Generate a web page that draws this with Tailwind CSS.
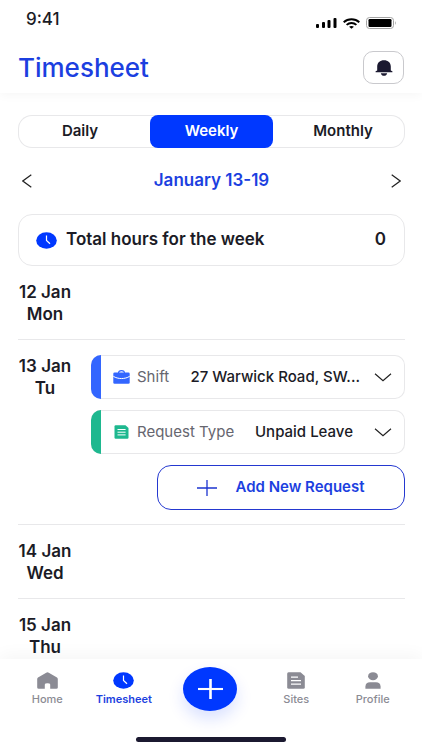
<!DOCTYPE html>
<html lang="en">
<head>
  <meta charset="UTF-8" />
  <meta name="viewport" content="width=device-width, initial-scale=1.0"/>
  <title>Timesheet</title>
  <script src="https://cdn.jsdelivr.net/npm/@tailwindcss/browser@4"></script>
</head>
<body class="h-screen flex flex-col bg-white text-[#1b1b26] font-['Inter','Open_Sans',sans-serif]">
  <header class="relative shrink-0 bg-white pt-2 pb-2 shadow-[0_2px_10px_rgba(0,0,0,0.04)]">
    <!-- Status bar -->
    <div class="flex justify-between items-center h-6 pl-[26px] pr-[25px]">
      <span class="text-[17px] font-medium">9:41</span>
      <div class="flex items-center gap-[6px] pt-[6px]">
        <svg class="w-[21px] h-[10px]" viewBox="0 0 21 10" fill="#000">
          <rect x="0" y="6" width="3" height="4" rx="1"/>
          <rect x="6" y="4" width="3" height="6" rx="1"/>
          <rect x="11.5" y="2" width="3" height="8" rx="1"/>
          <rect x="17.5" y="0" width="3" height="10" rx="1"/>
        </svg>
        <svg class="w-[17px] h-[11px]" viewBox="0 0 17 11" fill="none" stroke="#000" stroke-width="1.9">
          <path d="M0.7 4.2 C5 0.2 12 0.2 16.3 4.2"/>
          <path d="M3.6 6.9 C6.4 4.3 10.6 4.3 13.4 6.9"/>
          <path d="M6.1 8.8 C7.4 7.7 9.6 7.7 10.9 8.8 L8.5 10.8Z" fill="#000" stroke="none"/>
        </svg>
        <svg class="w-[31px] h-[12px]" viewBox="0 0 31 12">
          <rect x="0.5" y="0.5" width="27" height="11" rx="3" fill="none" stroke="#a3a3a3"/>
          <rect x="2.5" y="2" width="23" height="8" rx="1.2" fill="#000"/>
          <path d="M29 4 Q30.8 6 29 8Z" fill="#a3a3a3"/>
        </svg>
      </div>
    </div>
    <div class="flex justify-between items-center h-[35px] mt-[18px] px-[18px]">
      <h1 class="text-[26px] font-medium text-[#1c3fe0]">Timesheet</h1>
      <button aria-label="Notifications" class="w-[41px] h-[33px] flex items-center justify-center rounded-[10px] border border-[#c9c9cd]">
        <svg class="w-[18px] h-[16px]" viewBox="0 0 18 16" fill="#1b1930">
          <path d="M2.2 10.5 V6.5 C2.2 2.6 5 0.2 9 0.2 S15.8 2.6 15.8 6.5 V10.5 L17.4 11.3 V12.2 H0.6 V11.3Z"/>
          <path d="M5.8 13.2 H12.2 C11.6 15 10.6 15.8 9 15.8 S6.4 15 5.8 13.2Z"/>
        </svg>
      </button>
    </div>
  </header>

  <main class="flex-1 min-h-0 overflow-hidden pl-[18px] pr-[17px] pt-[22px]">
    <div class="flex h-[33px] rounded-[14px] text-[15px] font-semibold shadow-[inset_0_0_0_1px_#e8e8ea]">
      <button class="flex-1 pr-2">Daily</button>
      <button class="w-[123px] rounded-lg bg-[#0038ff] text-white">Weekly</button>
      <button class="flex-1 pl-2">Monthly</button>
    </div>

    <div class="flex justify-between items-center h-[66px] px-1">
      <button aria-label="Previous week">
        <svg class="w-[10px] h-[14px]" viewBox="0 0 10 14" fill="none" stroke="#222" stroke-width="1.2"><path d="M9.3 0.7 L0.8 7 L9.3 13.3"/></svg>
      </button>
      <h2 class="text-[17px] font-semibold text-[#1c3fe0]">January 13-19</h2>
      <button aria-label="Next week">
        <svg class="w-[10px] h-[14px]" viewBox="0 0 10 14" fill="none" stroke="#222" stroke-width="1.2"><path d="M0.7 0.7 L9.2 7 L0.7 13.3"/></svg>
      </button>
    </div>

    <div class="flex items-center h-[52px] pl-[17px] pr-[18px] rounded-[14px] border border-[#e8e8ea] text-[17px] font-semibold">
      <svg class="w-[21px] h-[17px] mr-[9px]" viewBox="0 0 21 17">
        <ellipse cx="10.5" cy="8.5" rx="10.3" ry="8.3" fill="#0038ff"/>
        <path d="M10.5 3.5 V8.5 L14 11.8" fill="none" stroke="#fff" stroke-width="1.2"/>
      </svg>
      <span>Total hours for the week</span>
      <span class="ml-auto">0</span>
    </div>

    <section class="pt-[15px] pb-[14px] border-b border-[#e8e8ea]">
      <h3 class="w-[54px] text-center text-[17px] leading-[22px] font-semibold whitespace-nowrap">12 Jan<br>Mon</h3>
    </section>

    <section class="flex gap-[19px] pt-[15px] pb-[14px] border-b border-[#e8e8ea]">
      <h3 class="w-[54px] text-center text-[17px] leading-[22px] font-semibold whitespace-nowrap">13 Jan<br>Tu</h3>
      <div class="flex-1 min-w-0 flex flex-col gap-[11px]">
        <div class="flex items-center h-11 pr-[13px] rounded-[10px] overflow-hidden shadow-[inset_0_0_0_1px_#e8e8ea]">
          <div class="w-[10px] h-full bg-[#3366ff]"></div>
          <svg class="w-[17px] h-[14px] ml-3" viewBox="0 0 17 14">
            <path d="M5.5 3 C5.5 -0.2 11.5 -0.2 11.5 3" fill="none" stroke="#3366ff" stroke-width="1.1"/>
            <rect x="0.3" y="2.4" width="16.4" height="11.4" rx="1.3" fill="#3366ff"/>
            <path d="M0.3 6.3 C5 9.3 12 9.3 16.7 6.3" fill="none" stroke="#fff" stroke-width="1"/>
          </svg>
          <label for="shift" class="ml-[7px] text-[15px] text-[#66666f]">Shift</label>
          <select id="shift" class="appearance-none flex-1 min-w-0 ml-2 mr-[14px] text-right text-[15px] font-medium">
            <option>27 Warwick Road, SW...</option>
          </select>
          <svg class="w-[18px] h-[9px]" viewBox="0 0 18 9" fill="none" stroke="#222" stroke-width="1.2"><path d="M1 0.8 L9 7.8 L17 0.8"/></svg>
        </div>
        <div class="flex items-center h-11 pr-[13px] rounded-[10px] overflow-hidden shadow-[inset_0_0_0_1px_#e8e8ea]">
          <div class="w-[10px] h-full bg-[#1eb88f]"></div>
          <svg class="w-[17px] h-[14px] ml-3" viewBox="0 0 17 14">
            <path d="M2.7 0.3 H12.5 L15.5 3 V12.5 Q15.5 13.7 14.3 13.7 H2.7 Q1.5 13.7 1.5 12.5 V1.5 Q1.5 0.3 2.7 0.3Z" fill="#1eb88f"/>
            <path d="M4.5 4.5 H12.6 M4.5 7.2 H12.6 M4.5 9.9 H12.6" stroke="#fff" stroke-width="1"/>
          </svg>
          <label for="request" class="ml-[7px] text-[15px] text-[#66666f]">Request Type</label>
          <select id="request" class="appearance-none flex-1 min-w-0 ml-2 mr-[21px] text-right text-[15px] font-medium">
            <option>Unpaid Leave</option>
          </select>
          <svg class="w-[18px] h-[9px]" viewBox="0 0 18 9" fill="none" stroke="#222" stroke-width="1.2"><path d="M1 0.8 L9 7.8 L17 0.8"/></svg>
        </div>
        <button class="flex items-center justify-center gap-[18px] h-[45px] ml-[66px] rounded-[14px] border border-[#2438d0] text-[#1c3fe0] text-[15px] font-semibold">
          <svg class="w-5 h-4" viewBox="0 0 20 16" fill="none" stroke="#1c34d0" stroke-width="1.3"><path d="M10 0 V16 M0 8 H20"/></svg>
          Add New Request
        </button>
      </div>
    </section>

    <section class="pt-[15px] pb-[14px] border-b border-[#e8e8ea]">
      <h3 class="w-[54px] text-center text-[17px] leading-[22px] font-semibold whitespace-nowrap">14 Jan<br>Wed</h3>
    </section>

    <section class="pt-[15px] pb-[14px]">
      <h3 class="w-[54px] text-center text-[17px] leading-[22px] font-semibold whitespace-nowrap">15 Jan<br>Thu</h3>
    </section>
  </main>

  <!-- Bottom navigation -->
  <nav class="relative shrink-0 bg-white pt-2 pb-2 shadow-[0_-4px_16px_rgba(0,0,0,0.04)]">
    <div class="flex h-[62px] pl-[9px] pr-[11px] text-[11px] leading-3 font-medium text-[#8b8b94]">
      <a href="#" class="flex-1 flex flex-col items-center gap-1 pt-[5px]">
        <svg class="w-[21px] h-[17px]" viewBox="0 0 21 17" fill="#8b8b94"><path d="M9.2 0.8 Q10.5 -0.1 11.8 0.8 L20 5.6 Q20.8 6.2 20.8 7 V15.4 Q20.8 16.8 19.3 16.8 H13.2 V12.5 Q13.2 11.2 10.5 11.2 T7.8 12.5 V16.8 H1.7 Q0.2 16.8 0.2 15.4 V7 Q0.2 6.2 1 5.6Z"/></svg>
        Home
      </a>
      <a href="#" class="flex-1 flex flex-col items-center gap-1 pt-[5px] text-[#1c3fe0] font-semibold">
        <svg class="w-[21px] h-[17px]" viewBox="0 0 21 17">
          <ellipse cx="10.5" cy="8.5" rx="10.3" ry="8.3" fill="#0038ff"/>
          <path d="M10.5 3.5 V8.5 L14 11.8" fill="none" stroke="#fff" stroke-width="1.2"/>
        </svg>
        Timesheet
      </a>
      <div class="w-24 flex justify-center items-start">
        <button aria-label="Add" class="w-[54px] h-11 flex items-center justify-center rounded-[50%] bg-[#0038ff] shadow-[0_8px_16px_rgba(0,56,255,0.15)]">
          <svg class="w-[25px] h-5" viewBox="0 0 25 20" fill="none" stroke="#fff"><path d="M12.5 0 V20" stroke-width="2.6"/><path d="M0 10 H25" stroke-width="2.1"/></svg>
        </button>
      </div>
      <a href="#" class="flex-1 flex flex-col items-center gap-1 pt-[5px]">
        <svg class="w-[18px] h-[17px]" viewBox="0 0 18 17">
          <path d="M1.5 0.2 H13.5 L17.8 4 V15.3 Q17.8 16.8 16.3 16.8 H1.7 Q0.2 16.8 0.2 15.3 V1.7 Q0.2 0.2 1.5 0.2Z" fill="#8b8b94"/>
          <path d="M4 5.2 H11 M4 8.7 H14 M4 12.2 H14" stroke="#fff" stroke-width="1.2"/>
        </svg>
        Sites
      </a>
      <a href="#" class="flex-1 flex flex-col items-center gap-1 pt-[5px]">
        <svg class="w-[16px] h-[17px]" viewBox="0 0 16 17" fill="#8b8b94">
          <ellipse cx="8" cy="4.2" rx="4.9" ry="4"/>
          <path d="M0.4 16.8 V14.5 Q0.8 10.3 5 10.3 H11 Q15.2 10.3 15.6 14.5 V16.8Z"/>
        </svg>
        Profile
      </a>
    </div>
    <div class="w-[150px] h-[5px] mx-auto mt-2 rounded-full bg-[#1b1930]"></div>
  </nav>
</body>
</html>
